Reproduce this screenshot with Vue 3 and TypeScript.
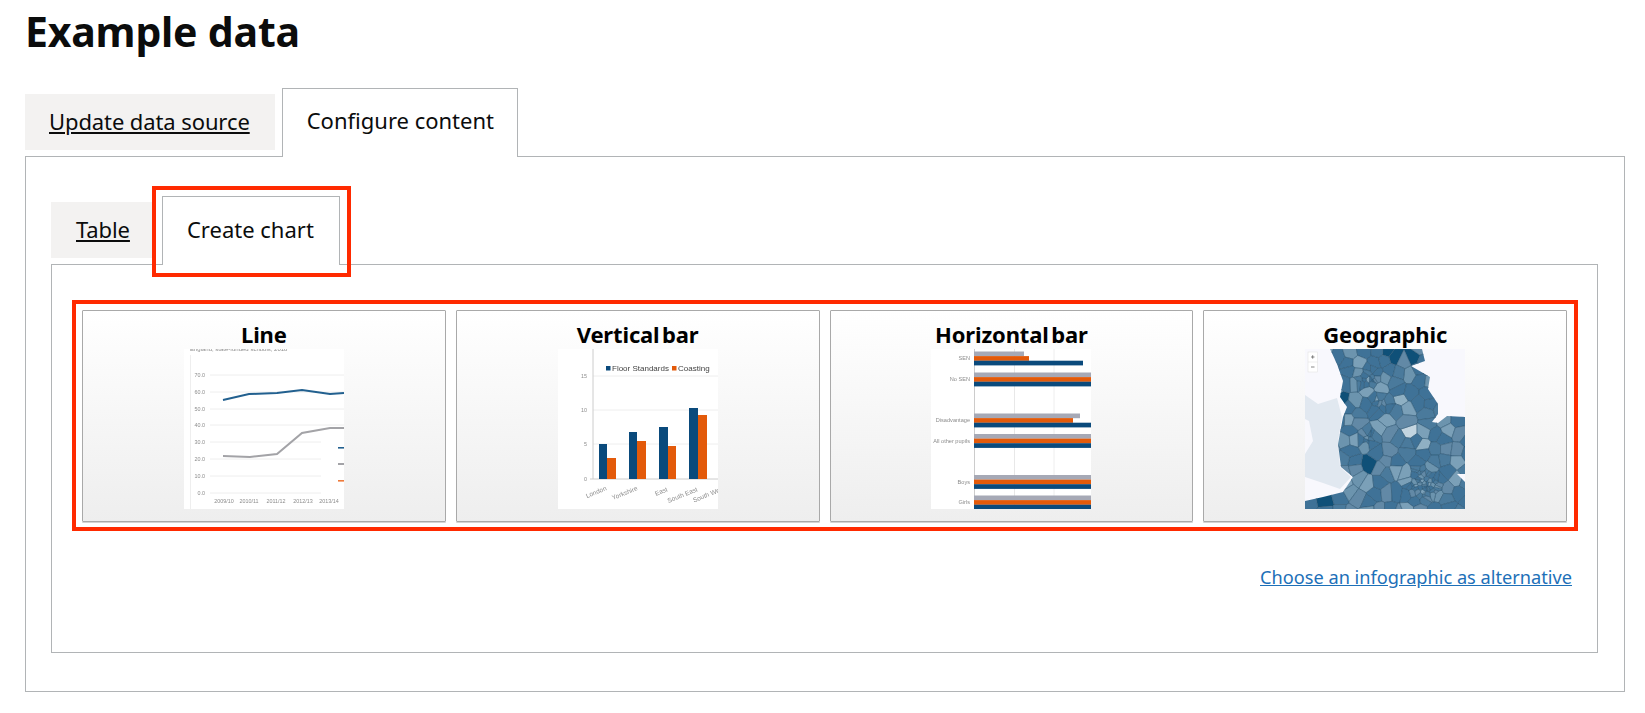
<script setup lang="ts">
type Bar = { x: number; y: number; w: number; h: number; c: string }

const blue = '#0a4a7c'
const orange = '#e35a0a'
const grey = '#a6a9b6'

// bars of the vertical chart
const vBars: Bar[] = [
  [41, 95, 8, 35, blue], [49, 109, 9, 21, orange],
  [71, 83, 8, 47, blue], [79, 92, 9, 38, orange],
  [101, 78, 9, 52, blue], [110, 97, 8, 33, orange],
  [131, 59, 9, 71, blue], [140, 66, 9, 64, orange],
].map(([x, y, w, h, c]) => ({ x, y, w, h, c } as Bar))

const hGroups = [
  { label: 'SEN', y: 2.5, w: [50, 55, 109] },
  { label: 'No SEN', y: 23.5, w: [117, 117, 117] },
  { label: 'Disadvantage', y: 64.5, w: [106, 99, 117] },
  { label: 'All other pupils', y: 85, w: [117, 117, 117] },
  { label: 'Boys', y: 126, w: [117, 117, 117] },
  { label: 'Girls', y: 146.5, w: [117, 117, 117] },
]

// ---- map: voronoi cells cut from a seeded set of points ----
let seed = 41
const rnd = () => {
  seed = (seed * 16807) % 2147483647
  return seed / 2147483647
}

const bigSites: [number, number, string][] = [
  [90, 8, '#0f5078'], [108, 8, '#0f5078'], [82, 2, '#0f5078'], [70, 14, '#3f7297'],
  [125, 55, '#3f7297'], [105, 25, '#6c94ae'], [96, 50, '#8fb0c3'], [105, 83, '#c3d5e0'],
  [118, 96, '#8fb0c3'], [65, 115, '#0f5078'], [20, 152, '#0f5078'], [48, 112, '#3f7297'],
  [45, 82, '#3f7297'], [70, 145, '#3f7297'], [35, 148, '#3f7297'], [138, 90, '#3f7297'],
  [152, 72, '#3f7297'], [34, 8, '#3f7297'], [4, 155, '#3f7297'], [35, 50, '#0f5078'],
]

const sites: { x: number; y: number; c: string }[] = bigSites.map(([x, y, c]) => ({ x, y, c }))
const tones = ['#3f7297', '#3f7297', '#3f7297', '#4a7a9c', '#4a7a9c', '#6289a6', '#6c94ae', '#7ba0b8']

for (let gy = 2; gy < 165; gy += 10) {
  for (let gx = 22; gx < 165; gx += 10) {
    const x = gx + rnd() * 7 - 3.5
    const y = gy + rnd() * 7 - 3.5
    const pick = tones[Math.floor(rnd() * tones.length)]
    if (!sites.some((s) => Math.hypot(s.x - x, s.y - y) < 8)) sites.push({ x, y, c: pick })
  }
}
// denser districts round the big towns
const clusters: [number, number, number, number][] = [
  [118, 135, 15, 50], [62, 30, 11, 16], [62, 88, 7, 10], [76, 55, 9, 8],
]
for (const [cx, cy, r, n] of clusters) {
  for (let i = 0; i < n; i++) {
    const a = rnd() * Math.PI * 2
    const d = Math.sqrt(rnd()) * r
    sites.push({ x: cx + Math.cos(a) * d, y: cy + Math.sin(a) * d, c: tones[Math.floor(rnd() * tones.length)] })
  }
}

const cellPath = (i: number) => {
  let poly: [number, number][] = [[-5, -5], [170, -5], [170, 170], [-5, 170]]
  const s = sites[i]
  sites.forEach((o, j) => {
    if (j === i) return
    const mx = (s.x + o.x) / 2
    const my = (s.y + o.y) / 2
    const nx = o.x - s.x
    const ny = o.y - s.y
    const next: [number, number][] = []
    poly.forEach((p, k) => {
      const q = poly[(k + 1) % poly.length]
      const dp = (p[0] - mx) * nx + (p[1] - my) * ny
      const dq = (q[0] - mx) * nx + (q[1] - my) * ny
      if (dp <= 0) next.push(p)
      if (dp * dq < 0) {
        const t = dp / (dp - dq)
        next.push([p[0] + (q[0] - p[0]) * t, p[1] + (q[1] - p[1]) * t])
      }
    })
    poly = next
  })
  return 'M' + poly.map((p) => p[0].toFixed(1) + ' ' + p[1].toFixed(1)).join('L') + 'Z'
}
const cells = sites.map((s, i) => ({ d: cellPath(i), c: s.c }))

const land =
  'M25 0L117 0L120 12L106 17L125 28L123 40L133 55L133 65L127 73L133 74L142 67L160 68L160 125L152 125L160 133L160 160L0 160L0 152L18 148L38 143L48 128L36 118L33 95L38 68L42 58L35 48L38 32L32 15Z'
const wales =
  'M0 46L13 55L32 49L37 68L33 92L35 118L46 128L35 140L18 134L0 128L0 105L8 92L4 72L0 70Z'
</script>

<template>
  <main class="page">
    <h1 class="title">Example data</h1>

    <div class="tabs">
      <a class="tab" href="#">Update data source</a>
      <span class="tab active">Configure content</span>
    </div>

    <section class="panel">
      <div class="tabs small">
        <a class="tab" href="#">Table</a>
        <span class="tab active marked">Create chart</span>
      </div>

      <div class="panel inner">
        <div class="choices">
          <button class="card">
            <span class="card-title">Line</span>
            <svg class="thumb" viewBox="0 0 160 160">
              <rect width="160" height="160" fill="#fff" />
              <text x="6" y="2" class="label" font-size="6">England, state-funded schools, 2018</text>
              <line x1="6.5" y1="6" x2="6.5" y2="160" stroke="#eee" />
              <g stroke="#eeeeee" stroke-width="1">
                <line x1="26" y1="26" x2="160" y2="26" />
                <line x1="26" y1="43" x2="160" y2="43" />
                <line x1="26" y1="60" x2="160" y2="60" />
                <line x1="26" y1="76" x2="160" y2="76" />
                <line x1="26" y1="93" x2="137" y2="93" />
                <line x1="26" y1="110" x2="137" y2="110" />
                <line x1="26" y1="127" x2="137" y2="127" />
                <line x1="26" y1="144" x2="137" y2="144" />
              </g>
              <g class="label" font-size="5.4" text-anchor="end">
                <text x="21" y="28">70.0</text>
                <text x="21" y="45">60.0</text>
                <text x="21" y="62">50.0</text>
                <text x="21" y="78">40.0</text>
                <text x="21" y="95">30.0</text>
                <text x="21" y="112">20.0</text>
                <text x="21" y="129">10.0</text>
                <text x="21" y="146">0.0</text>
              </g>
              <polyline points="39,51 65,45 93,44 118,41 146,45 160,44" fill="none" stroke="#22608f" stroke-width="2" />
              <polyline points="39,107 66,108 93,105 118,84 146,79 160,79" fill="none" stroke="#a3a3a7" stroke-width="2" />
              <rect x="154" y="98" width="6" height="1.6" fill="#22608f" />
              <rect x="154" y="114" width="6" height="2" fill="#a3a3a7" />
              <rect x="154" y="131" width="6" height="1.6" fill="#ee7a3a" />
              <g class="label" font-size="5.4" text-anchor="middle">
                <text x="40" y="154">2009/10</text>
                <text x="65" y="154">2010/11</text>
                <text x="92" y="154">2011/12</text>
                <text x="119" y="154">2012/13</text>
                <text x="145" y="154">2013/14</text>
              </g>
            </svg>
          </button>

          <button class="card">
            <span class="card-title">Vertical bar</span>
            <svg class="thumb" viewBox="0 0 160 160">
              <rect width="160" height="160" fill="#fff" />
              <g stroke="#eeeeee">
                <line x1="35" y1="27" x2="160" y2="27" />
                <line x1="35" y1="61" x2="160" y2="61" />
                <line x1="35" y1="95" x2="160" y2="95" />
              </g>
              <line x1="35" y1="0" x2="35" y2="130" stroke="#ccc" />
              <line x1="32" y1="130" x2="160" y2="130" stroke="#ccc" />
              <g class="label" font-size="5.4" text-anchor="end">
                <text x="29" y="29">15</text>
                <text x="29" y="63">10</text>
                <text x="29" y="97">5</text>
                <text x="29" y="132">0</text>
              </g>
              <rect x="48" y="17" width="4.5" height="4.5" :fill="blue" />
              <text x="54" y="22" class="legend" font-size="8">Floor Standards</text>
              <rect x="114" y="17" width="4.5" height="4.5" :fill="orange" />
              <text x="120" y="22" class="legend" font-size="8">Coasting</text>
              <rect v-for="(b, i) in vBars" :key="i" :x="b.x" :y="b.y" :width="b.w" :height="b.h" :fill="b.c" />
              <g class="label" font-size="6.5" text-anchor="end">
                <text transform="translate(49 141) rotate(-22)">London</text>
                <text transform="translate(80 141) rotate(-22)">Yorkshire</text>
                <text transform="translate(110 142) rotate(-22)">East</text>
                <text transform="translate(140 142) rotate(-22)">South East</text>
                <text transform="translate(167 141) rotate(-22)">South West</text>
              </g>
            </svg>
          </button>

          <button class="card">
            <span class="card-title">Horizontal bar</span>
            <svg class="thumb" viewBox="0 0 160 160">
              <rect width="160" height="160" fill="#fff" />
              <line x1="83.5" y1="0" x2="83.5" y2="160" stroke="#e8e8e8" />
              <line x1="123" y1="0" x2="123" y2="160" stroke="#eeeeee" />
              <line x1="43.5" y1="0" x2="43.5" y2="160" stroke="#ccc" />
              <g v-for="g in hGroups" :key="g.label">
                <text x="39" :y="g.y + 8.5" class="label" font-size="5.6" text-anchor="end">{{ g.label }}</text>
                <rect x="43" :y="g.y" :width="g.w[0]" height="4.7" :fill="grey" />
                <rect x="43" :y="g.y + 4.6" :width="g.w[1]" height="4.7" :fill="orange" />
                <rect x="43" :y="g.y + 9.2" :width="g.w[2]" height="4.7" :fill="blue" />
              </g>
            </svg>
          </button>

          <button class="card">
            <span class="card-title">Geographic</span>
            <svg class="thumb" viewBox="0 0 160 160">
              <defs>
                <clipPath id="england"><path :d="land" /></clipPath>
              </defs>
              <rect width="160" height="160" fill="#f8f8fd" />
              <path :d="wales" fill="#e1e8f0" />
              <g clip-path="url(#england)">
                <path v-for="(c, i) in cells" :key="i" :d="c.d" :fill="c.c" stroke="#2b5570" stroke-width="0.5" />
              </g>
              <rect x="3" y="3" width="9.5" height="20" fill="#fff" stroke="#ddd" stroke-width="0.5" />
              <line x1="3" y1="13" x2="12.5" y2="13" stroke="#ddd" stroke-width="0.5" />
              <path d="M6 8h3.5M7.7 6.2v3.5M6 18h3.5" stroke="#555" stroke-width="0.7" />
            </svg>
          </button>
        </div>

        <p class="more"><a href="#">Choose an infographic as alternative</a></p>
      </div>
    </section>
  </main>
</template>

<style scoped>
.page {
  padding: 0 20px 0 25px;
  color: #0b0c0c;
  font-family: "Noto Sans", "Liberation Sans", sans-serif;
}

.title {
  margin: 0;
  padding-top: 6px;
  height: 88px;
  box-sizing: border-box;
  font-size: 41px;
  line-height: 50px;
  font-weight: 700;
  letter-spacing: -0.2px;
}

.tabs {
  display: flex;
  align-items: flex-end;
  gap: 7px;
  height: 69px;
  margin-bottom: -1px;
  position: relative;
  z-index: 1;
}

.tab {
  box-sizing: border-box;
  height: 56px;
  margin-bottom: 7px;
  padding: 0 25px 3px 24px;
  display: flex;
  align-items: center;
  background: #f3f2f1;
  color: #0b0c0c;
  font-size: 22px;
  letter-spacing: -0.1px;
  text-decoration: underline;
}

.tab.active {
  height: 69px;
  margin-bottom: 0;
  padding: 0 23px 6px 24px;
  background: #fff;
  border: 1px solid #b1b4b6;
  border-bottom: 0;
  letter-spacing: 0;
  text-decoration: none;
}

.tabs.small {
  height: 69px;
}

.tabs.small .tab {
  padding: 0 25px 2px 25px;
}

.tabs.small .tab.active {
  padding: 0 25px 4px 24px;
}

.marked {
  position: relative;
}

.marked::after {
  content: "";
  position: absolute;
  left: -11px;
  right: -12px;
  top: -11px;
  bottom: -12px;
  border: 4px solid #ff2a00;
  pointer-events: none;
}

.panel {
  box-sizing: border-box;
  height: 536px;
  border: 1px solid #b1b4b6;
  padding: 39px 26px 0 25px;
}

.panel.inner {
  height: 389px;
  padding: 35px 19px 0 20px;
}

.choices {
  display: grid;
  grid-template-columns: repeat(4, 1fr);
  gap: 10px;
  padding: 6px 7px 5px 6px;
  border: 4px solid #ff2a00;
}

.card {
  height: 212px;
  padding: 11px 0 0;
  display: flex;
  flex-direction: column;
  align-items: center;
  border: 1px solid #a9a9a9;
  border-radius: 1px;
  background: linear-gradient(#fff, #eeeeee);
  box-shadow: 0 1px 0 #d4d4d4;
  font-family: inherit;
  color: #000;
  cursor: pointer;
}

.card-title {
  height: 27px;
  font-size: 22px;
  line-height: 25px;
  font-weight: 700;
  letter-spacing: -0.15px;
  word-spacing: -3px;
}

.thumb {
  display: block;
  width: 160px;
  height: 160px;
  flex: none;
  filter: blur(0.4px);
}

.label {
  fill: #8c8c8c;
  font-family: "Liberation Sans", sans-serif;
}

.legend {
  fill: #444;
  font-family: "Liberation Sans", sans-serif;
}

.more {
  margin: 34px 0 0;
  text-align: right;
  padding-right: 6px;
  font-size: 18.2px;
  line-height: 24px;
}

.more a {
  color: #1d70b8;
}
</style>

<style>
body {
  background: #fff;
}
</style>
